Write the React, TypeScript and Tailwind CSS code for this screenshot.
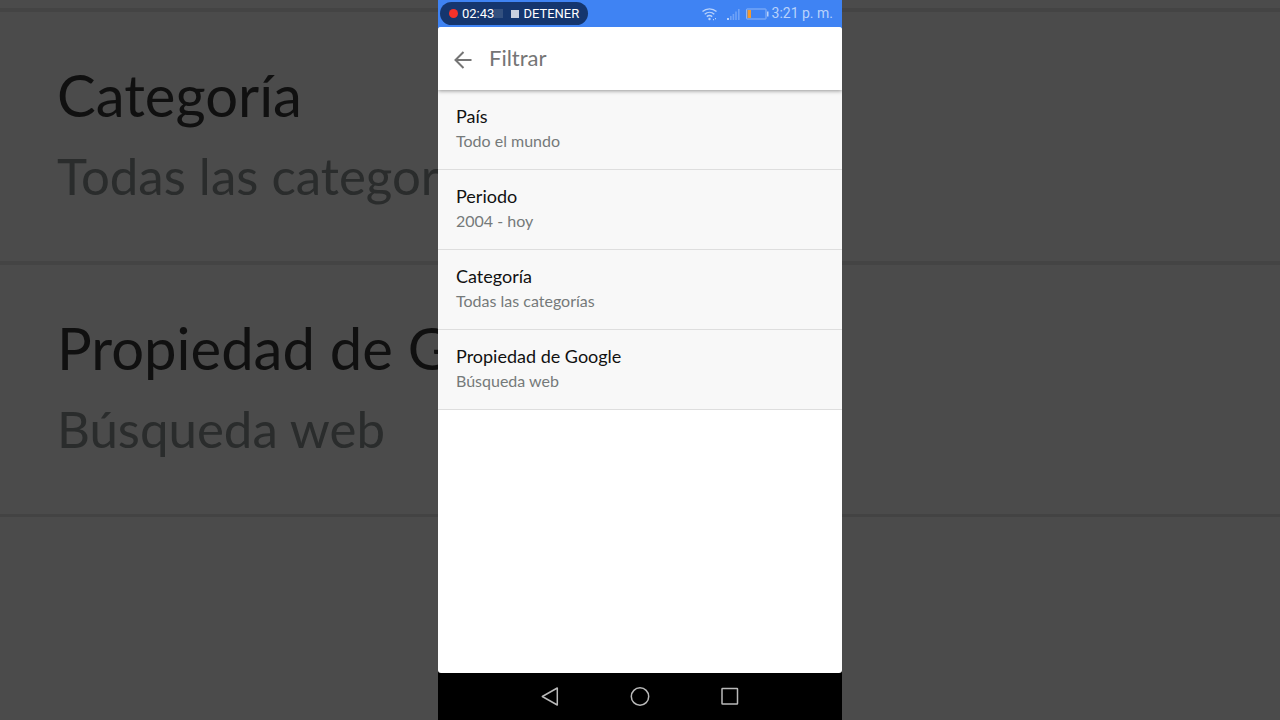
const filters = [
  { label: "País", value: "Todo el mundo" },
  { label: "Periodo", value: "2004 - hoy" },
  { label: "Categoría", value: "Todas las categorías" },
  { label: "Propiedad de Google", value: "Búsqueda web" },
];

/** Enlarged, dimmed copy of the last rows, cut off where the phone begins. */
function Backdrop() {
  return (
    <div
      aria-hidden="true"
      className="col-start-1 row-start-1 min-w-0 overflow-hidden bg-[#4b4b4b] pt-2 whitespace-nowrap"
    >
      {filters.slice(2).map((item) => (
        <div
          key={item.label}
          className="border-t-4 border-[#444444] pt-[42px] pr-[calc(50%+202px)] pb-[45px] pl-[57px]"
        >
          <p className="overflow-hidden text-[58px] leading-[82px] text-[#101010]">{item.label}</p>
          <p className="overflow-hidden text-[51px] leading-[80px] text-[#2a2c2c]">{item.value}</p>
        </div>
      ))}
      <div className="border-t-3 border-[#434343]" />
    </div>
  );
}

function StatusBar() {
  return (
    <div className="flex h-[27px] items-center justify-between bg-[#3f83f3] pr-[9px] pl-[2px] font-[Roboto,sans-serif]">
      <div className="flex h-[23px] items-center rounded-full bg-[#15366e] px-[9px] text-[13px] text-white">
        <span className="mr-1 h-[9px] w-[9px] rounded-full bg-[#f5322a]" />
        <span>02:43</span>
        <span className="mr-2 h-[9px] w-[9px] bg-[#33507f]" />
        <button type="button" className="flex items-center gap-1">
          <span className="h-2 w-2 bg-[#c9d0df]" />
          DETENER
        </button>
      </div>

      <div className="flex items-center text-[14px] text-[#b8d2fb]">
        <svg className="mr-[9px]" width="17" height="14" viewBox="0 0 17 14" fill="none" stroke="currentColor" strokeWidth="1.4">
          <path d="M1.5 4.6C5.5 1 11.5 1 15.5 4.600" />
          <path d="M3.7 7.2c2.8-2.5 6.8-2.5 9.6 0" />
          <path d="M5.8 9.6c1.6-1.3 3.8-1.3 5.4 0" />
          <circle cx="8.5" cy="12" r="1.2" fill="currentColor" stroke="none" />
          <path d="M12 12.6h1M14 11.6h1" />
        </svg>
        <svg className="mr-[6px]" width="13" height="12" viewBox="0 0 13 12">
          <path d="M0 10h2v2H0z" fill="#b8d2fb" />
          <path d="M3 8h1.6v4H3zM5.6 6h1.6v6H5.6zM8.2 3.5h1.6V12H8.2zM11 1h1.6v11H11z" fill="#6fa2f7" />
        </svg>
        <svg className="mr-[3px]" width="23" height="12" viewBox="0 0 23 12">
          <rect x="0.5" y="1" width="19.5" height="10" rx="0.5" fill="none" stroke="#8fb6f7" />
          <rect x="1.5" y="2" width="3.5" height="8" fill="#f39a2e" />
          <rect x="21" y="3.5" width="1.5" height="5" fill="#b8d2fb" />
        </svg>
        <span>3:21 p. m.</span>
      </div>
    </div>
  );
}

function NavBar() {
  return (
    <nav className="flex h-[47px] items-center justify-center gap-[66px] bg-black text-[#b9b9b9]">
      <button type="button" aria-label="Atrás">
        <svg width="24" height="24" viewBox="0 0 24 24" fill="none" stroke="currentColor" strokeWidth="1.5" strokeLinejoin="round">
          <path d="M19.3 3v17L4.300 11.500z" />
        </svg>
      </button>
      <button type="button" aria-label="Inicio">
        <svg width="24" height="24" viewBox="0 0 24 24" fill="none" stroke="currentColor" strokeWidth="1.5">
          <circle cx="12" cy="11.5" r="8.7" />
        </svg>
      </button>
      <button type="button" aria-label="Recientes">
        <svg width="24" height="24" viewBox="0 0 24 24" fill="none" stroke="currentColor" strokeWidth="1.5">
          <rect x="4" y="3.5" width="15.5" height="15.5" rx="0.5" />
        </svg>
      </button>
    </nav>
  );
}

export default function App() {
  return (
    <div className="grid min-h-screen grid-cols-1 font-[Lato,sans-serif]">
      <Backdrop />

      <div className="relative col-start-1 row-start-1 flex w-full max-w-[404px] flex-col justify-self-center bg-black">
        <StatusBar />

        {/* Bar colours show through behind the rounded corners */}
        <div className="flex flex-1 flex-col bg-linear-to-b from-[#3f83f3] from-50% to-black to-50%">
          <div className="flex flex-1 flex-col overflow-hidden rounded-[3px] bg-white">
            <header className="relative flex h-[63px] items-center gap-4 bg-white px-[15px] text-[#757575] shadow-[0_1px_4px_rgba(0,0,0,0.4)]">
              <button type="button" aria-label="Volver">
                <svg width="20" height="20" viewBox="0 0 20 20" fill="none" stroke="currentColor" strokeWidth="2">
                  <path d="M18.5 11H2.5M10.5 3l-8 8 8 8" />
                </svg>
              </button>
              <h1 className="pb-[2px] text-[22px] leading-7">Filtrar</h1>
            </header>

            <main>
              {filters.map((item) => (
                <button
                  key={item.label}
                  type="button"
                  className="block w-full border-b border-[#dedede] bg-[#f8f8f8] px-[18px] pt-[13px] pb-[16px] text-left"
                >
                  <span className="block text-[18px] leading-[26px] text-[#111111]">{item.label}</span>
                  <span className="block text-[16px] leading-6 text-[#757a7a]">{item.value}</span>
                </button>
              ))}
            </main>
          </div>
        </div>

        <NavBar />
      </div>
    </div>
  );
}
